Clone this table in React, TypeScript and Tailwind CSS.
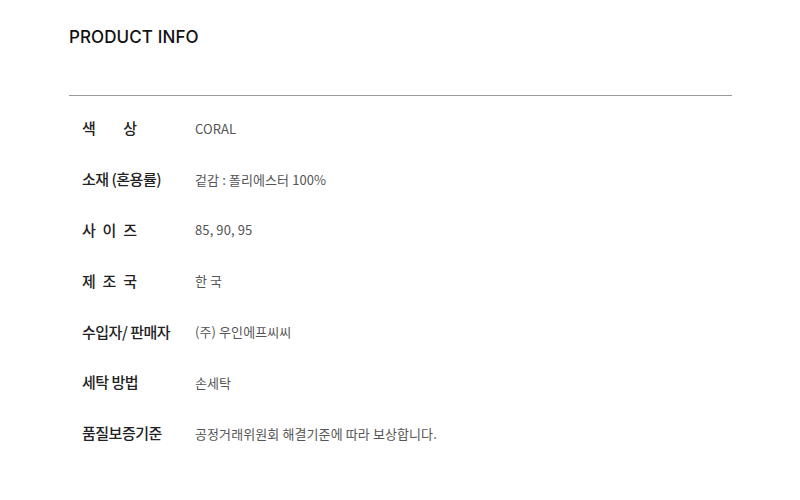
const rows: { label: string[]; value: string }[] = [
  { label: ["색", "상"], value: "CORAL" },
  { label: ["소재 (혼용률)"], value: "겉감 : 폴리에스터 100%" },
  { label: ["사", "이", "즈"], value: "85, 90, 95" },
  { label: ["제", "조", "국"], value: "한 국" },
  { label: ["수입자/ 판매자"], value: "(주) 우인에프씨씨" },
  { label: ["세탁 방법"], value: "손세탁" },
  { label: ["품질보증기준"], value: "공정거래위원회 해결기준에 따라 보상합니다." },
];

export default function App() {
  return (
    <div
      className="w-[800px] h-[500px] bg-white px-[69px] pt-[26px]"
      style={{ fontFamily: '"Noto Sans CJK KR", "Noto Sans", sans-serif' }}
    >
      <h2
        className="text-[17px] leading-[22px] font-medium text-[#111] tracking-[0.1px]"
        style={{ fontFamily: 'Inter, "Noto Sans CJK KR", sans-serif' }}
      >
        PRODUCT INFO
      </h2>
      <div className="mt-[47px] w-[663px] border-t border-[#9a9a9a]" />
      <div className="pt-[7px] pl-[13px]">
        {rows.map((r) => (
          <div key={r.value} className="flex items-center h-[50.85px]">
            <div className="w-[113px] text-[15px] font-medium text-[#222]">
              {r.label.length > 1 ? (
                <div className="flex justify-between w-[55px]">
                  {r.label.map((c) => (
                    <span key={c}>{c}</span>
                  ))}
                </div>
              ) : (
                <span className="tracking-[-0.5px]">{r.label[0]}</span>
              )}
            </div>
            <div className="text-[13px] text-[#555] tracking-[0.1px]">{r.value}</div>
          </div>
        ))}
      </div>
    </div>
  );
}
